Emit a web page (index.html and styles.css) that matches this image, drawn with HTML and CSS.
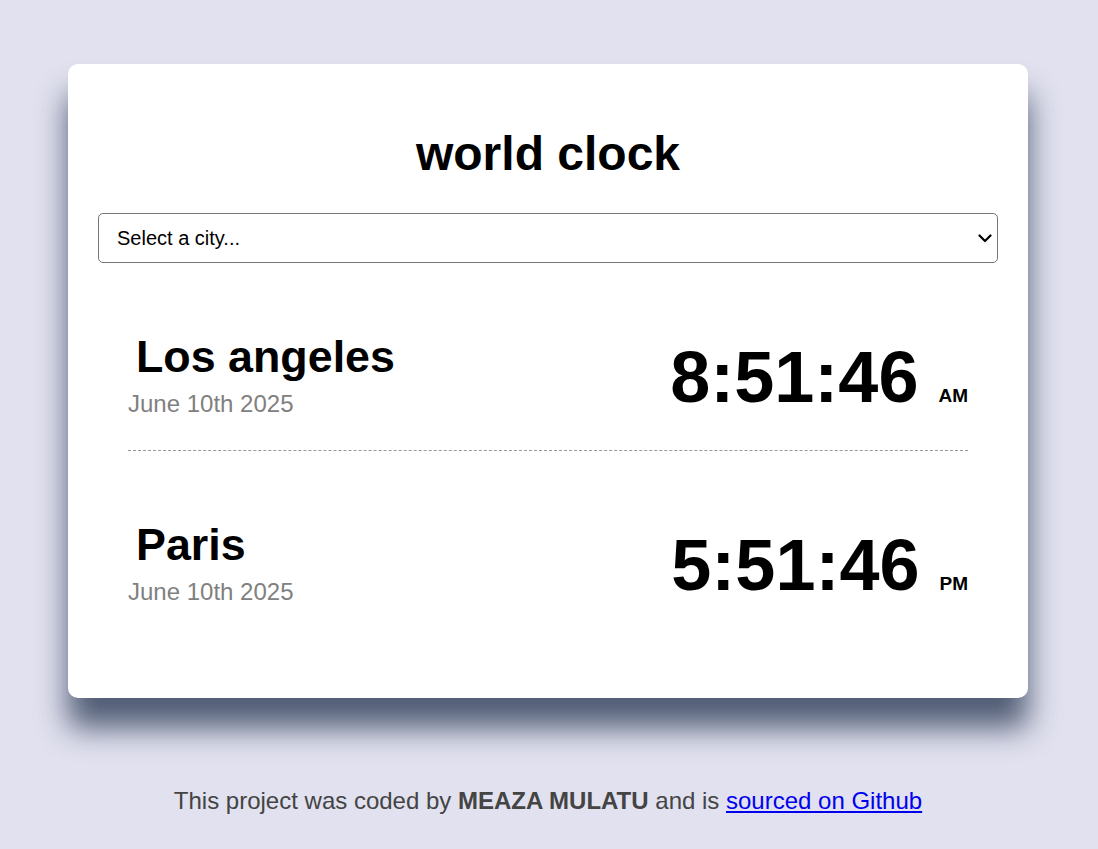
FILE: index.html
```html
<!DOCTYPE html>
<html lang="en">
<head>
<meta charset="utf-8">
<title>World Clock</title>
<link rel="stylesheet" href="styles.css">
</head>
<body>
<div class="container">
  <main class="card">
    <h1 class="title">world clock</h1>
    <div class="select-wrap">
      <select class="city-select">
        <option>Select a city...</option>
        <option>Los Angeles</option>
        <option>Paris</option>
      </select>
      <svg class="select-arrow" width="14" height="9" viewBox="0 0 14 9" aria-hidden="true">
        <path d="M1.5 1.5 L7 7 L12.5 1.5" fill="none" stroke="#000" stroke-width="2.2" stroke-linecap="round" stroke-linejoin="round"/>
      </svg>
    </div>
    <div class="cities">
      <div class="city">
        <div class="city-info">
          <div class="city-name">Los angeles</div>
          <div class="city-date">June 10th 2025</div>
        </div>
        <div class="city-time">8:51:46 <small class="ampm">AM</small></div>
      </div>
      <div class="city">
        <div class="city-info">
          <div class="city-name">Paris</div>
          <div class="city-date">June 10th 2025</div>
        </div>
        <div class="city-time">5:51:46 <small class="ampm">PM</small></div>
      </div>
    </div>
  </main>
  <footer class="footer">
    This project was coded by <strong>MEAZA MULATU</strong> and is <a href="#" class="footer-link">sourced on Github</a>
  </footer>
</div>
</body>
</html>
```

FILE: styles.css
```css
html, body {
  margin: 0;
  padding: 0;
}

body {
  background: #e1e1ef;
  font-family: "Liberation Sans", Arial, sans-serif;
  color: #000;
  padding-right: 2px;
}

.container {
  width: 960px;
  margin: 64px auto 0;
}

.card {
  display: block;
  background: #fff;
  border-radius: 10px;
  padding: 30px;
  box-shadow: 0 30px 30px rgba(65, 79, 104, 0.9);
}

.title {
  font-size: 48px;
  font-weight: bold;
  text-align: center;
  margin: 32px 0;
  line-height: normal;
}

.select-wrap {
  position: relative;
}

.city-select {
  display: block;
  width: 900px;
  height: 50px;
  font-family: "Liberation Sans", Arial, sans-serif;
  font-size: 20px;
  color: #000;
  background: #fff;
  border: 1px solid #767676;
  border-radius: 5px;
  padding: 0 40px 0 18px;
  margin: 0;
  box-sizing: border-box;
  appearance: none;
  -webkit-appearance: none;
}

.select-arrow {
  position: absolute;
  right: 6px;
  top: 21px;
  pointer-events: none;
}

.cities {
  padding: 0 30px 30px;
}

.city {
  display: flex;
  justify-content: space-between;
  align-items: flex-end;
  padding: 68px 0 32px;
  border-bottom: 1px dashed #999;
}

.city:last-child {
  border-bottom: none;
}

.city-name {
  font-size: 44.8px;
  font-weight: bold;
  padding-left: 8px;
  margin-bottom: 8px;
}

.city-date {
  font-size: 24px;
  color: #808080;
}

.city-time {
  font-size: 72px;
  font-weight: bold;
}

.ampm {
  font-size: 19px;
  font-weight: bold;
}

.footer {
  margin-top: 89px;
  text-align: center;
  font-size: 24px;
  color: #444;
}

.footer strong {
  font-weight: bold;
}

.footer-link {
  color: #0000ee;
  text-decoration: underline;
}
```
